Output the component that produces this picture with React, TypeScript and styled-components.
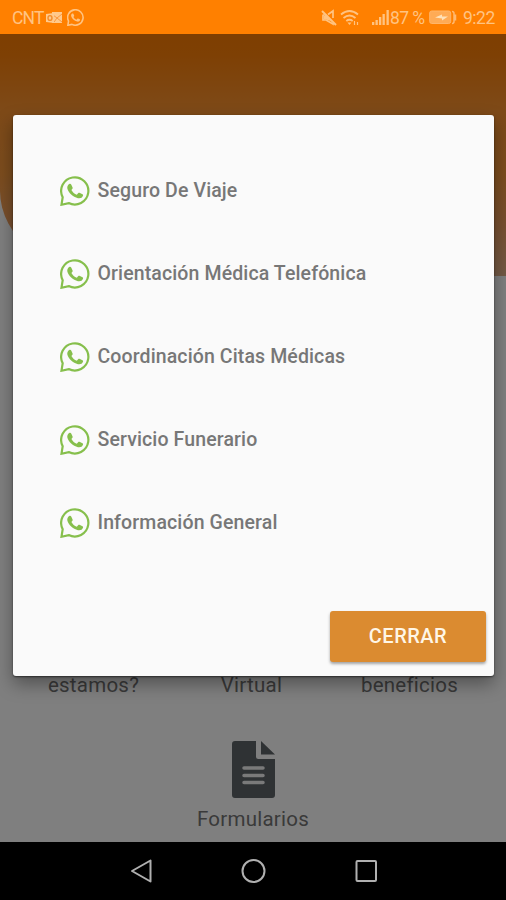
import React from "react";
import styled, { createGlobalStyle } from "styled-components";

const GlobalStyle = createGlobalStyle`
  * { box-sizing: border-box; }
  html, body { margin: 0; padding: 0; background: #000; }
  body { font-family: Roboto, "Liberation Sans", sans-serif; overflow: hidden; }
`;

const Phone = styled.div`
  width: 506px;
  height: 900px;
  display: flex;
  flex-direction: column;
  overflow: hidden;
`;

const StatusBar = styled.header`
  height: 34px;
  flex: none;
  display: flex;
  align-items: center;
  justify-content: space-between;
  padding: 1px 11px 0 12px;
  background: #ff8000;
  color: #ffc382;
  font-size: 17.5px;
`;

const StatusGroup = styled.div`
  display: flex;
  align-items: center;
  height: 100%;
  svg { display: block; flex: none; }
`;

const StatusText = styled.span<{ $width: number; $gap?: number; $spacing?: number }>`
  width: ${(p) => p.$width}px;
  margin-left: ${(p) => p.$gap ?? 0}px;
  letter-spacing: ${(p) => p.$spacing ?? 0}px;
  white-space: nowrap;
`;

const Gap = styled.span<{ $size: number }>`
  width: ${(p) => p.$size}px;
`;

const Screen = styled.main`
  position: relative;
  height: 808px;
  flex: none;
  overflow: hidden;
  background: #fff;
`;

const Page = styled.div`
  height: 100%;
  display: flex;
  flex-direction: column;
`;

const Hero = styled.div`
  height: 242px;
  flex: none;
  background: linear-gradient(#fc7e04 0, #fc8008 20px, #fc9430 76px, #f89a3c 140px, #f0a060 190px, #e6b48c 242px);
  border-bottom-left-radius: 110px 85px;
`;

const Tiles = styled.div`
  margin-top: 363px;
  padding-right: 3px;
  display: grid;
  grid-template-columns: repeat(3, 158px);
  justify-content: center;
  row-gap: 44px;
`;

const Tile = styled.div<{ $shift?: number }>`
  display: flex;
  flex-direction: column;
  align-items: center;
  padding-left: ${(p) => p.$shift ?? 0}px;
  color: #747474;
  font-size: 20.5px;
  line-height: 24px;
  letter-spacing: 0.25px;
  svg { display: block; margin-bottom: 9px; }
`;

const TileLabel = styled.span<{ $offset?: number }>`
  margin-top: ${(p) => p.$offset ?? 0}px;
`;

const Scrim = styled.div`
  position: absolute;
  inset: 0;
  display: flex;
  align-items: flex-start;
  padding: 81px 12px 0 13px;
  background: rgba(0, 0, 0, 0.5);
`;

const Dialog = styled.section`
  width: 100%;
  height: 561px;
  display: flex;
  flex-direction: column;
  justify-content: space-between;
  padding: 34px 8px 14px 46px;
  border-radius: 3px;
  background: #fafafa;
  box-shadow: 0 1px 2px rgba(0, 0, 0, 0.55), 0 8px 18px rgba(0, 0, 0, 0.36);
`;

const Options = styled.ul`
  margin: 0;
  padding: 0;
  list-style: none;
`;

const Option = styled.li`
  height: 83px;
  display: flex;
  align-items: center;
  gap: 8px;
  color: #777;
  font-size: 19.5px;
  font-weight: 500;
  letter-spacing: 0.12px;
  white-space: nowrap;
`;

const OptionIcon = styled.span`
  flex: none;
  padding-left: 0.5px;
  color: #86bf4c;
  svg { display: block; }
`;

const CloseButton = styled.button`
  align-self: flex-end;
  width: 156px;
  height: 51px;
  padding: 0 0 2px;
  border: 0;
  border-radius: 3px;
  background: #db8b30;
  color: #fff6e6;
  font: 500 20px Roboto, "Liberation Sans", sans-serif;
  letter-spacing: 0.5px;
  box-shadow: 0 2px 3px rgba(0, 0, 0, 0.35);
`;

const NavBar = styled.nav`
  flex: 1;
  display: flex;
  align-items: center;
  padding: 0 0 0 129px;
  background: #000;
  svg { display: block; flex: none; }
`;

const WhatsApp = ({ size, weight = 2.2 }: { size: number; weight?: number }) => (
  <svg width={size} height={size} viewBox="0 0 30 30">
    <path
      d="M1.5 28.7 2.7 21.2A13.6 13.6 0 1 1 8.7 27.1Z"
      fill="none"
      stroke="currentColor"
      strokeWidth={weight}
      strokeLinejoin="miter"
    />
    <path
      d="M9.2 8.1c.6-.5 1.6-.4 2 .3l1.4 3c.2.5.1.9-.2 1.3l-1 1.3c1.3 2.3 3 3.8 5.4 4.8l1.5-1.7c.3-.4.8-.5 1.2-.3l3 1.5c.6.3.7.9.5 1.5-.7 2-2.7 2.9-5 2.4-5.2-1.2-9.4-5.3-10.6-9.4-.5-2 .4-3.8 1.8-4.7Z"
      fill="currentColor"
    />
  </svg>
);

const MailIcon = () => (
  <svg width="17" height="14" viewBox="0 0 17 14">
    <path d="M6 1h10v11H6z" fill="#ffc98c" />
    <path d="m7 4 4 3 5-4M8 11l3-4 5 4" fill="none" stroke="#fb973c" />
    <path d="m0 3 8-1v10l-8-1z" fill="#ffc98c" />
    <ellipse cx="4" cy="7" rx="2" ry="2.4" fill="none" stroke="#f48b27" strokeWidth="1.4" />
  </svg>
);

const MutedIcon = () => (
  <svg width="16" height="17" viewBox="0 0 16 17" fill="none" stroke="#ffc382">
    <path d="M1.5 6h3l1.5 1M7 5.5 12 2v7M2 6v5h3l7 4v-1" strokeWidth="1.7" />
    <path d="m1 2 14 14" strokeWidth="1.9" />
    <path d="M3 7h3l4 5-5-1.5H3z" fill="#ffc382" stroke="none" />
  </svg>
);

const WifiIcon = () => (
  <svg width="20" height="17" viewBox="0 0 20 17" fill="none" stroke="#ffc382" strokeWidth="1.8">
    <path d="M1 5.5q8.5-7 17 0M3.5 9q6-5 12 0M6.3 12q3.2-2.5 6.4 0" />
    <path d="m7.5 13.5 2 2.5 2-2.5z" fill="#ffc382" stroke="none" />
    <path d="M14.5 12v4M17.5 13v3" strokeWidth="1.2" />
  </svg>
);

const SignalIcon = () => (
  <svg width="18" height="17" viewBox="0 0 18 17" fill="#ffc382">
    <path d="M0 13h2.3v3H0zM3.5 11h2.3v5H3.5zM7 8h2.3v8H7zM10.5 5h2.3v11h-2.3zM14.5 1h2.3v15h-2.3z" />
  </svg>
);

const BatteryIcon = () => (
  <svg width="29" height="15" viewBox="0 0 29 15">
    <rect x=".7" y="1" width="21" height="12.5" rx="2" fill="#ffab55" stroke="#ffb569" />
    <path d="M23 1.5q2 0 2 2v8q0 2-2 2M26.5 4.5v6" fill="none" stroke="#ffb971" strokeWidth="1.5" />
    <path d="m6 7.5 7-3v2h6l-6 4v-2z" fill="#ffe1b9" />
  </svg>
);

const FormIcon = () => (
  <svg width="43" height="57" viewBox="0 0 43 57">
    <path
      d="M3 0H24V15.5q0 2.5 2.5 2.5H43V54q0 3-3 3H3q-3 0-3-3V3Q0 0 3 0Z"
      fill="#5e6468"
    />
    <path d="M29 0 43 13.5H29Z" fill="#5e6468" />
    <path d="M12 27h19M12 34.5h19M12 41.5h19" stroke="#f4f4f4" strokeWidth="3.5" strokeLinecap="round" />
  </svg>
);

const options = [
  "Seguro De Viaje",
  "Orientación Médica Telefónica",
  "Coordinación Citas Médicas",
  "Servicio Funerario",
  "Información General",
];

export default function App() {
  return (
    <Phone>
      <GlobalStyle />
      <StatusBar>
        <StatusGroup>
          <StatusText $width={34} $spacing={-0.8}>CNT</StatusText>
          <MailIcon />
          <Gap $size={4} />
          <WhatsApp size={17} weight={2.8} />
        </StatusGroup>
        <StatusGroup>
          <MutedIcon />
          <Gap $size={3} />
          <WifiIcon />
          <Gap $size={12} />
          <SignalIcon />
          <StatusText $width={37} $spacing={-0.6}>87 %</StatusText>
          <Gap $size={2} />
          <BatteryIcon />
          <StatusText $width={32} $gap={5} $spacing={-0.5}>9:22</StatusText>
        </StatusGroup>
      </StatusBar>
      <Screen>
        <Page>
          <Hero />
          <Tiles>
            <Tile><TileLabel $offset={34}>estamos?</TileLabel></Tile>
            <Tile><TileLabel $offset={34}>Virtual</TileLabel></Tile>
            <Tile><TileLabel $offset={34}>beneficios</TileLabel></Tile>
            <span />
            <Tile $shift={3}>
              <FormIcon />
              <TileLabel>Formularios</TileLabel>
            </Tile>
          </Tiles>
        </Page>
        <Scrim>
          <Dialog role="dialog">
            <Options>
              {options.map((label) => (
                <Option key={label}>
                  <OptionIcon><WhatsApp size={30} /></OptionIcon>
                  {label}
                </Option>
              ))}
            </Options>
            <CloseButton>CERRAR</CloseButton>
          </Dialog>
        </Scrim>
      </Screen>
      <NavBar>
        <svg width="24" height="26" viewBox="0 0 24 26" fill="none" stroke="#b0b0b0" strokeWidth="2">
          <path d="M21.5 2.5V23.5L3 13Z" strokeLinejoin="round" />
        </svg>
        <Gap $size={88} />
        <svg width="26" height="26" viewBox="0 0 26 26" fill="none" stroke="#b0b0b0" strokeWidth="2">
          <circle cx="12.5" cy="13" r="11" />
        </svg>
        <Gap $size={88} />
        <svg width="24" height="26" viewBox="0 0 24 26" fill="none" stroke="#b0b0b0" strokeWidth="2">
          <rect x="1.5" y="3" width="19.5" height="20" rx="1" />
        </svg>
      </NavBar>
    </Phone>
  );
}
